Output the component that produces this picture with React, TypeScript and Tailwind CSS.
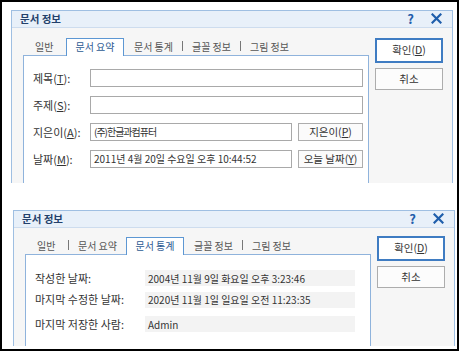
import React from 'react';

const TABS = ['일반', '문서 요약', '문서 통계', '글꼴 정보', '그림 정보'];

const Key = ({ k }: { k: string }) => <span className="underline underline-offset-1">{k}</span>;

const CloseIcon = () => (
  <svg width="11" height="11" viewBox="0 0 11 11" className="ml-[17px]">
    <path d="M1.5 1.5 L9.5 9.5 M9.5 1.5 L1.5 9.5" stroke="#1f5eab" strokeWidth="2.2" strokeLinecap="square" />
  </svg>
);

const TitleBar = ({ h }: { h: string }) => (
  <div className={`flex items-center ${h} bg-[#e8f0f9] border-b border-[#cddcee] pl-[8px] pr-[10px]`}>
    <span className="text-[10.5px] font-bold text-[#23406b]">문서 정보</span>
    <span className="ml-auto text-[13px] leading-none font-bold text-[#1f5eab]">?</span>
    <CloseIcon />
  </div>
);

const Tabs = ({ active }: { active: number }) => (
  <div className="flex items-end text-[10px] text-[#555]">
    {TABS.map((t, i) => {
      if (i === 0) {
        return (
          <div key={t} className="w-[43px] h-[17px] pl-[12px] flex items-center">
            {t}
          </div>
        );
      }
      if (i === active) {
        return (
          <div
            key={t}
            className="relative z-10 w-[58px] h-[18px] -mb-px bg-white border border-b-0 border-[#5d97d3] flex items-center justify-center pb-px text-[#2d5b93]"
          >
            {t}
          </div>
        );
      }
      return (
        <div key={t} className="w-[58px] h-[17px] flex items-center">
          <span className={`w-px h-[10px] ${i - 1 === active ? 'bg-transparent' : 'bg-[#777]'}`} />
          <span className="flex-1 text-center">{t}</span>
        </div>
      );
    })}
  </div>
);

const Btn = ({ children, primary }: { children: React.ReactNode; primary?: boolean }) =>
  primary ? (
    <div className="w-[68px] h-[25px] border-2 border-[#3f7cc2] bg-white flex items-center justify-center text-[10.5px] text-[#333]">
      {children}
    </div>
  ) : (
    <div className="w-[68px] h-[22px] mt-[5px] border border-[#adadad] bg-[#fcfcfc] flex items-center justify-center text-[10.5px] text-[#333]">
      {children}
    </div>
  );

const Input = ({ w, children, extra }: { w: string; children?: React.ReactNode; extra?: string }) => (
  <div className={`${w} h-[18px] border border-[#a9a9a9] bg-white pl-[3px] flex items-center text-[10px] text-[#333] ${extra ?? ''}`}>
    {children}
  </div>
);

const SmallBtn = ({ children }: { children: React.ReactNode }) => (
  <div className="w-[65px] h-[18px] ml-[6px] border border-[#adadad] bg-[#fbfbfb] flex items-center justify-center text-[10.5px] text-[#333]">
    {children}
  </div>
);

const SummaryPanel = () => (
  <div className="h-[200px] border border-[#8fb3dc] bg-white pt-[13px] pl-[9px] flex flex-col gap-[9px] text-[11px] text-[#333]">
    <div className="flex items-center">
      <span className="w-[57px]">제목(<Key k="T" />):</span>
      <Input w="w-[273px]" />
    </div>
    <div className="flex items-center">
      <span className="w-[57px]">주제(<Key k="S" />):</span>
      <Input w="w-[273px]" />
    </div>
    <div className="flex items-center">
      <span className="w-[57px]">지은이(<Key k="A" />):</span>
      <Input w="w-[202px]" extra="tracking-[-1px]">(주)한글과컴퓨터</Input>
      <SmallBtn>
        지은이(<Key k="P" />)
      </SmallBtn>
    </div>
    <div className="flex items-center">
      <span className="w-[57px]">날짜(<Key k="M" />):</span>
      <Input w="w-[202px]">2011년 4월 20일 수요일 오후 10:44:52</Input>
      <SmallBtn>
        오늘 날짜(<Key k="Y" />)
      </SmallBtn>
    </div>
  </div>
);

const StatRow = ({ label, value, mt }: { label: string; value: string; mt: string }) => (
  <div className={`flex items-center ${mt}`}>
    <span className="w-[110px] text-[11px]">{label}</span>
    <div className="w-[210px] h-[16px] bg-[#f3f3f3] pl-[3px] flex items-center text-[10px]">{value}</div>
  </div>
);

const StatsPanel = () => (
  <div className="h-[200px] border border-[#8fb3dc] bg-white pt-[15px] pl-[9px] flex flex-col text-[#333]">
    <StatRow label="작성한 날짜:" value="2004년 11월 9일 화요일 오후 3:23:46" mt="" />
    <StatRow label="마지막 수정한 날짜:" value="2020년 11월 1일 일요일 오전 11:23:35" mt="mt-[5px]" />
    <StatRow label="마지막 저장한 사람:" value="Admin" mt="mt-[8px]" />
  </div>
);

const Dialog = ({
  active,
  titleH,
  btnTop,
  outer,
  children,
}: {
  active: number;
  titleH: string;
  btnTop: string;
  outer: string;
  children: React.ReactNode;
}) => (
  <div className={`${outer} w-[442px] border border-b-0 border-[#9fbfe2] bg-[#f6f6f6] overflow-hidden flex flex-col`}>
    <TitleBar h={titleH} />
    <div className="flex">
      <div className="ml-[11px] w-[346px]">
        <div className={active === 1 ? 'pt-[10px]' : 'pt-[9px]'}>
          <Tabs active={active} />
        </div>
        {children}
      </div>
      <div className={`ml-[6px] flex flex-col ${btnTop}`}>
        <Btn primary>
          확인(<Key k="D" />)
        </Btn>
        <Btn>취소</Btn>
      </div>
    </div>
  </div>
);

export default function App() {
  return (
    <div className="w-[465px] h-[354px] bg-white font-['Noto_Sans_CJK_KR','Noto_Sans',sans-serif]">
      <div className="w-[459px] h-[351px] border-2 border-black overflow-hidden flex flex-col">
        <Dialog active={1} titleH="h-[25px]" btnTop="pt-[10px]" outer="ml-[9px] mt-[8px] h-[173px]">
          <SummaryPanel />
        </Dialog>
        <Dialog active={2} titleH="h-[26px]" btnTop="pt-[8px]" outer="ml-[11px] mt-[27px] h-[136px]">
          <StatsPanel />
        </Dialog>
      </div>
    </div>
  );
}
